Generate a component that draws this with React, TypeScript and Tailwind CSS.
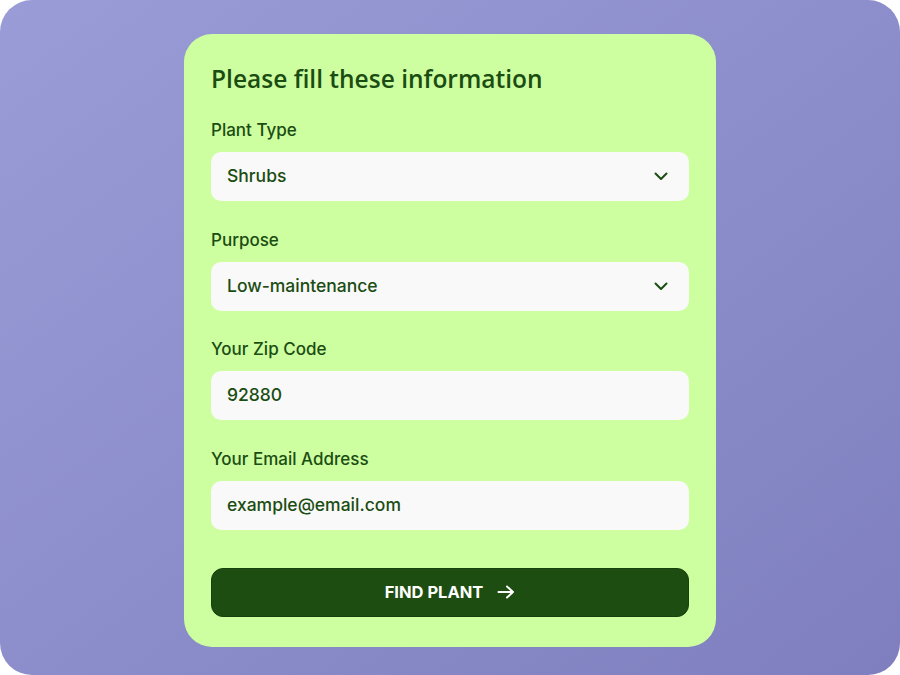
import React from "react";

const Chevron = () => (
  <svg width="14" height="9" viewBox="0 0 14 9" fill="none">
    <path d="M1.5 1.5L7 7L12.5 1.5" stroke="#1b4d12" strokeWidth="2" strokeLinecap="round" strokeLinejoin="round" />
  </svg>
);

const Arrow = () => (
  <svg width="18" height="14" viewBox="0 0 18 14" fill="none">
    <path d="M1.5 7H16M10 1.5L16 7L10 12.5" stroke="white" strokeWidth="2" strokeLinecap="round" strokeLinejoin="round" />
  </svg>
);

function Field({ label, value, select }: { label: string; value: string; select?: boolean }) {
  return (
    <div className="flex flex-col gap-[12px]">
      <div className="text-[17px] leading-[20px] font-medium text-[#1b4d12]" style={{ fontFamily: "Inter, sans-serif" }}>
        {label}
      </div>
      <div className="h-[49px] rounded-[10px] bg-[#f9f9f9] flex items-center justify-between pl-[16px] pr-[21px]">
        <span className="text-[17.5px] font-medium text-[#1b4d12]" style={{ fontFamily: "Inter, sans-serif" }}>
          {value}
        </span>
        {select && <Chevron />}
      </div>
    </div>
  );
}

export default function App() {
  return (
    <div className="w-[900px] h-[675px] bg-white">
      <div className="w-full h-full rounded-[32px] bg-gradient-to-br from-[#9a9cd7] to-[#7f7fbf] flex justify-center pt-[34px]">
        <div className="w-[532px] h-[613px] bg-[#cdfea0] rounded-[28px] px-[27px] pt-[30px] flex flex-col">
          <h1 className="text-[24.5px] leading-[30px] font-semibold text-[#1b4d12]" style={{ fontFamily: "'Open Sans', sans-serif" }}>
            Please fill these information
          </h1>
          <div className="mt-[26px] flex flex-col gap-[28.5px]">
            <Field label="Plant Type" value="Shrubs" select />
            <Field label="Purpose" value="Low-maintenance" select />
            <Field label="Your Zip Code" value="92880" />
            <Field label="Your Email Address" value="example@email.com" />
          </div>
          <button className="mt-[38px] h-[49px] rounded-[12px] bg-[#1d4d11] border border-[#16400c] flex items-center justify-center gap-[14px] text-white">
            <span className="text-[16.5px] font-bold" style={{ fontFamily: "Inter, sans-serif" }}>FIND PLANT</span>
            <Arrow />
          </button>
        </div>
      </div>
    </div>
  );
}
